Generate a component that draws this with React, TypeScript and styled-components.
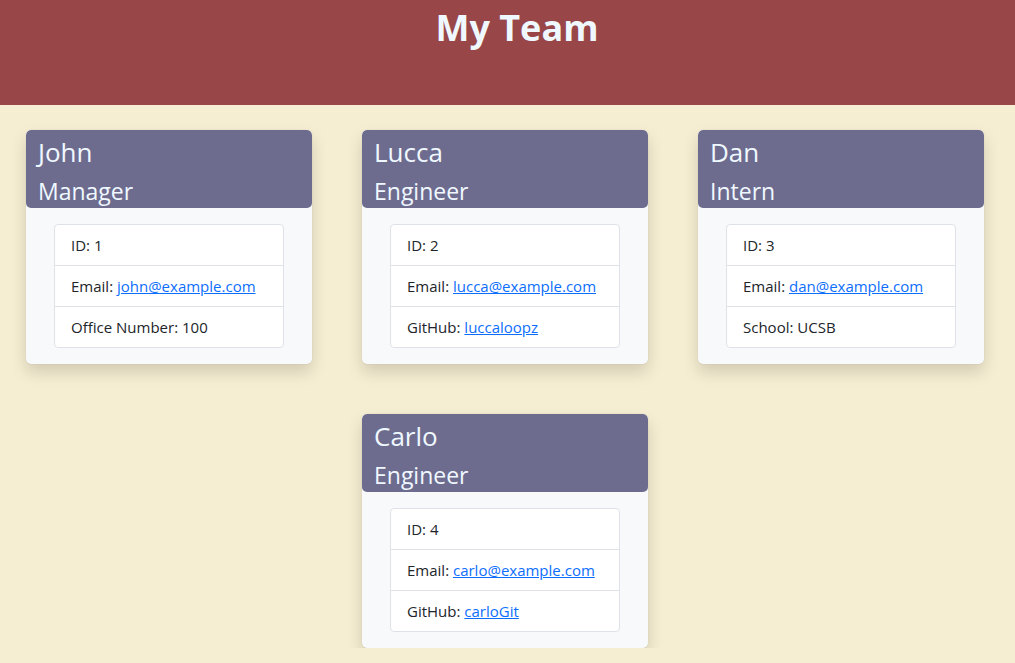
import React from "react";
import styled, { createGlobalStyle } from "styled-components";

const GlobalStyle = createGlobalStyle`
  html, body { margin: 0; padding: 0; }
  body {
    background: #f6eed2;
    font-family: "Open Sans", "Noto Sans", sans-serif;
    color: #212529;
    font-size: 15px;
  }
  * { box-sizing: border-box; }
`;

const Banner = styled.header`
  height: 105px;
  background: #984648;
  display: flex;
  justify-content: center;
  padding: 4px 0 0 19px;
`;

const Title = styled.h1`
  margin: 0;
  font-size: 36px;
  line-height: 48px;
  font-weight: 700;
  color: #f0f8ff;
`;

const Grid = styled.main`
  display: grid;
  grid-template-columns: repeat(3, 286px);
  column-gap: 50px;
  row-gap: 50px;
  padding: 25px 0 0 26px;
`;

const Card = styled.section<{ $col?: number }>`
  width: 286px;
  background: #f8f9fa;
  border-radius: 5px;
  box-shadow: 0 0 1px rgba(0, 0, 0, 0.2), 0 8px 16px rgba(0, 0, 0, 0.15);
  overflow: hidden;
  grid-column: ${(p) => (p.$col ? String(p.$col) : "auto")};
`;

const CardHeader = styled.div`
  background: #6d6c8f;
  color: #f0f8ff;
  padding: 5px 12px 0;
  height: 78px;
  border-radius: 5px;
  overflow: hidden;
`;

const Name = styled.h2`
  margin: 0;
  font-size: 26px;
  font-weight: 400;
  line-height: 34px;
`;

const Role = styled.h3`
  margin: 0;
  font-size: 23px;
  font-weight: 400;
  line-height: 44px;
`;

const Body = styled.div`
  padding: 16px 28px;
`;

const List = styled.ul`
  list-style: none;
  margin: 0;
  padding: 0;
  background: #fff;
  border: 1px solid #dee2e6;
  border-radius: 4px;
`;

const Item = styled.li`
  padding: 8px 16px;
  line-height: 24px;
  border-top: 1px solid #dee2e6;
  &:first-child { border-top: none; }
`;

const Link = styled.a`
  color: #0d6efd;
  text-decoration: underline;
`;

type Member = {
  name: string;
  role: string;
  id: number;
  email: string;
  extraLabel: string;
  extra: string;
  extraLink?: boolean;
  col?: number;
};

const team: Member[] = [
  { name: "John", role: "Manager", id: 1, email: "john@example.com", extraLabel: "Office Number", extra: "100" },
  { name: "Lucca", role: "Engineer", id: 2, email: "lucca@example.com", extraLabel: "GitHub", extra: "luccaloopz", extraLink: true },
  { name: "Dan", role: "Intern", id: 3, email: "dan@example.com", extraLabel: "School", extra: "UCSB" },
  { name: "Carlo", role: "Engineer", id: 4, email: "carlo@example.com", extraLabel: "GitHub", extra: "carloGit", extraLink: true, col: 2 },
];

export default function App() {
  return (
    <>
      <GlobalStyle />
      <Banner>
        <Title>My Team</Title>
      </Banner>
      <Grid>
        {team.map((m) => (
          <Card key={m.id} $col={m.col}>
            <CardHeader>
              <Name>{m.name}</Name>
              <Role>{m.role}</Role>
            </CardHeader>
            <Body>
              <List>
                <Item>ID: {m.id}</Item>
                <Item>
                  Email: <Link href={`mailto:${m.email}`}>{m.email}</Link>
                </Item>
                <Item>
                  {m.extraLabel}:{" "}
                  {m.extraLink ? (
                    <Link href={`https://github.com/${m.extra}`}>{m.extra}</Link>
                  ) : (
                    m.extra
                  )}
                </Item>
              </List>
            </Body>
          </Card>
        ))}
      </Grid>
    </>
  );
}
